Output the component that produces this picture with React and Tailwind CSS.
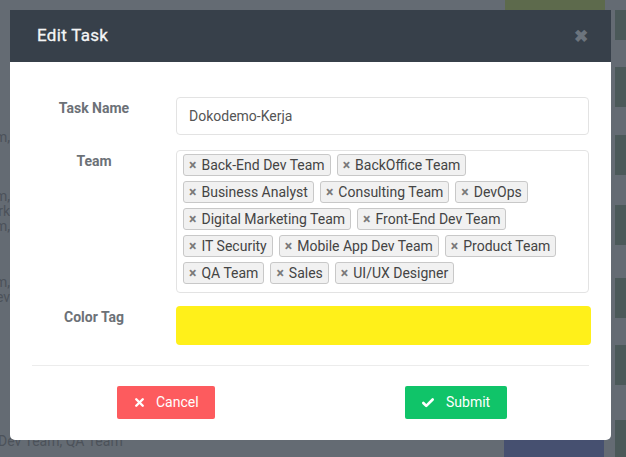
import { X, Check } from "lucide-react";

const rows = [
  ["Back-End Dev Team", "BackOffice Team"],
  ["Business Analyst", "Consulting Team", "DevOps"],
  ["Digital Marketing Team", "Front-End Dev Team"],
  ["IT Security", "Mobile App Dev Team", "Product Team"],
  ["QA Team", "Sales", "UI/UX Designer"],
];

const bgLines = [
  { top: "mt-[130px]", text: "Team, Product Team, Sales Team," },
  { top: "mt-[44px]", text: "Team, Product Team, Sales Team," },
  { top: "mt-0", text: "IT Security, Frontend Work" },
  { top: "mt-0", text: "Team, Product Team, Sales Team," },
  { top: "mt-[41px]", text: "Team, Product Team, Sales Team," },
  { top: "mt-0", text: "Mobile App Dev" },
];

function Tag({ label }) {
  return (
    <span className="flex h-[22px] items-center rounded-[3px] border border-[#c8c8c8] bg-[#f1f1f1] pl-[5px] pr-[5px] text-[14px] text-[#444]">
      <span className="mr-[5px] text-[14px] font-bold leading-none text-[#7a7a7a]">×</span>
      {label}
    </span>
  );
}

export default function App() {
  return (
    <div className="relative h-[457px] w-[626px] overflow-hidden bg-[#646b73] font-['Roboto',sans-serif]">
      {/* page underneath the dim overlay */}
      <div className="flex h-full">
        <div className="flex w-[10px] flex-col items-end overflow-hidden text-[14px] leading-[15px] text-[#4c525a]">
          {bgLines.map((l, i) => (
            <div key={i} className={`${l.top} whitespace-nowrap`}>
              {l.text}
            </div>
          ))}
        </div>
        <div className="flex flex-1 flex-col justify-between">
          <div className="ml-[495px] h-[10px] w-[100px] bg-[#5d6a4c]" />
          <div className="flex items-end">
            <div className="mb-[5px] ml-[-12px] flex-1 whitespace-nowrap text-[14px] text-[#4c525a]">Dev Team, QA Team</div>
            <div className="mr-[11px] h-[17px] w-[100px] bg-[#465070]" />
          </div>
        </div>
        <div className="flex w-[11px] flex-col">
          <div className="mt-[10px] h-[30px] bg-[#4b5959]" />
          <div className="mt-[27px] h-[40px] bg-[#4b5959]" />
          <div className="mt-[28px] h-[40px] bg-[#4b5959]" />
          <div className="mt-[30px] h-[40px] bg-[#4b5959]" />
          <div className="mt-[33px] h-[40px] bg-[#4b5959]" />
          <div className="mt-[27px] h-[40px] bg-[#4b5959]" />
          <div className="mt-[35px] flex-1 bg-[#4b5959]" />
        </div>
      </div>

      {/* modal */}
      <div className="absolute left-[10px] top-[10px] w-[601px] overflow-hidden rounded-b-[5px] bg-white">
        <div className="flex h-[52px] items-center justify-between bg-[#37404a] pl-[27px] pr-[23px]">
          <span className="text-[17px] tracking-[0.3px] text-[#f4f5f6] [-webkit-text-stroke:0.3px_#f4f5f6]">Edit Task</span>
          <span className="text-[17px] font-bold leading-none text-[#6c747d]">✖</span>
        </div>

        <div className="px-[22px] pt-[35px]">
          <div className="flex">
            <div className="w-[144px] pr-[20px] pt-[1px] text-center text-[14px] font-bold text-[#6c7177]">Task Name</div>
            <div className="flex h-[38px] flex-1 items-center rounded-[4px] border border-[#e3e3e3] pl-[12px] text-[14px] text-[#555]">
              Dokodemo-Kerja
            </div>
          </div>

          <div className="mt-[15px] flex">
            <div className="w-[144px] pr-[20px] pt-[1px] text-center text-[14px] font-bold text-[#6c7177]">Team</div>
            <div className="flex flex-1 flex-col gap-[5px] rounded-[4px] border border-[#e3e3e3] pb-[8px] pl-[6px] pt-[3px]">
              {rows.map((r, i) => (
                <div key={i} className="flex gap-[6px]">
                  {r.map((t) => (
                    <Tag key={t} label={t} />
                  ))}
                </div>
              ))}
            </div>
          </div>

          <div className="mt-[13px] flex">
            <div className="w-[144px] pr-[20px] pt-[1px] text-center text-[14px] font-bold text-[#6c7177]">Color Tag</div>
            <div className="mr-[-2px] h-[39px] flex-1 rounded-[4px] bg-[#fff01a]" />
          </div>

          <div className="mt-[20px] h-px bg-[#ececec]" />

          <div className="flex pb-[21px] pt-[20px]">
            <button className="ml-[85px] flex h-[33px] w-[98px] items-center rounded-[2px] bg-[#fd5b5e] pl-[16px] text-[14px] text-white">
              <X size={13} strokeWidth={4.5} />
              <span className="ml-[10px]">Cancel</span>
            </button>
            <button className="ml-[190px] flex h-[33px] w-[102px] items-center rounded-[2px] bg-[#10c469] pl-[16px] text-[14px] text-white">
              <Check size={14} strokeWidth={4.5} />
              <span className="ml-[11px]">Submit</span>
            </button>
          </div>
        </div>
      </div>
    </div>
  );
}
